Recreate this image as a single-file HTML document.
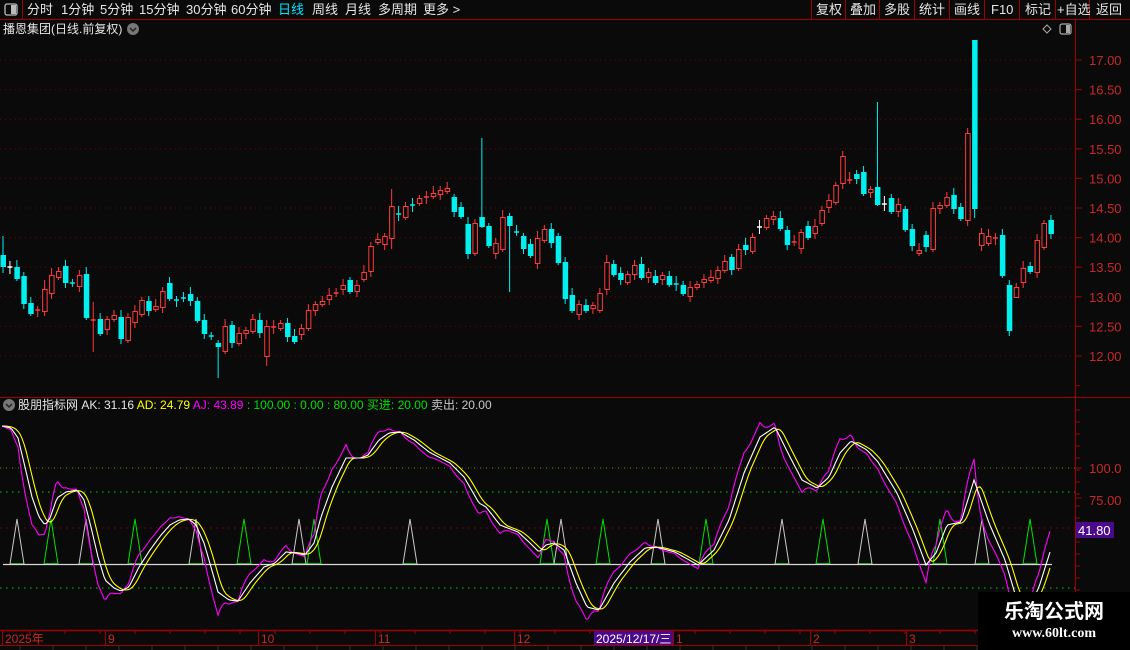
<!DOCTYPE html>
<html><head><meta charset="utf-8"><style>
html,body{margin:0;padding:0;background:#0a0a0a;width:1130px;height:650px;overflow:hidden;font-family:"Liberation Sans","Noto Sans CJK SC",sans-serif;}
.t{position:absolute;font-size:13px;color:#e6e6e6;white-space:nowrap;line-height:19px;top:0}
svg{position:absolute;left:0;top:0}
</style></head><body>
<svg id="s" width="1130" height="650" xmlns="http://www.w3.org/2000/svg"></svg>
<div class="t" style="left:27px">分时</div>
<div class="t" style="left:61px">1分钟</div>
<div class="t" style="left:100px">5分钟</div>
<div class="t" style="left:139px">15分钟</div>
<div class="t" style="left:186px">30分钟</div>
<div class="t" style="left:231px">60分钟</div>
<div class="t" style="left:278px;color:#00e5ff">日线</div>
<div class="t" style="left:312px">周线</div>
<div class="t" style="left:345px">月线</div>
<div class="t" style="left:378px">多周期</div>
<div class="t" style="left:423px">更多 &gt;</div>
<div class="t" style="left:816px">复权</div>
<div class="t" style="left:850px">叠加</div>
<div class="t" style="left:884px">多股</div>
<div class="t" style="left:919px">统计</div>
<div class="t" style="left:954px">画线</div>
<div class="t" style="left:991px">F10</div>
<div class="t" style="left:1025px">标记</div>
<div class="t" style="left:1057px">+自选</div>
<div class="t" style="left:1096px">返回</div>
<div class="t" style="left:3px;top:20px;font-size:12px">播恩集团(日线.前复权)</div>
<div class="t" style="left:18px;top:396px;font-size:12px">股朋指标网 AK: 31.16 <span style="color:#ffff00">AD: 24.79</span> <span style="color:#ff00ff">AJ: 43.89</span> <span style="color:#00e000">: 100.00 : 0.00 : 80.00 买进: 20.00</span> <span style="color:#c8c8c8">卖出: 20.00</span></div>
<div style="position:absolute;left:978px;top:592px;width:152px;height:58px;background:#000"></div>
<div style="position:absolute;left:978px;top:596px;width:152px;text-align:center;color:#fff;font-size:20px;font-weight:bold;font-family:'Noto Sans CJK SC',sans-serif;line-height:28px">乐淘公式网</div>
<div style="position:absolute;left:978px;top:625px;width:152px;text-align:center;color:#fff;font-size:14px;font-weight:bold;font-family:'Liberation Serif',serif;line-height:18px">www.60lt.com</div>
<script>
const S=document.getElementById('s');let h='';
const R='#a00000';
h+=`<line x1="0" y1="19.5" x2="1130" y2="19.5" stroke="${R}"/>`;
h+=`<line x1="22.5" y1="0" x2="22.5" y2="19" stroke="${R}"/>`;
h+=`<rect x="5" y="4" width="12" height="11" rx="2" fill="none" stroke="#bbb" stroke-width="1.3"/><rect x="11" y="5" width="5" height="9" fill="#bbb"/>`;
[811,845,879,914,949,984,1019,1055,1089].forEach(x=>h+=`<line x1="${x+.5}" y1="0" x2="${x+.5}" y2="19" stroke="${R}"/>`);
h+=`<circle cx="133" cy="29" r="6" fill="#777"/><path d="M130 28 l3 3 l3 -3" stroke="#222" stroke-width="1.5" fill="none"/>`;
h+=`<path d="M1047 25 l4 4 l-4 4 l-4 -4z" fill="none" stroke="#aaa"/><rect x="1060" y="24" width="11" height="10" rx="2" fill="none" stroke="#aaa" stroke-width="1.2"/><rect x="1066" y="25" width="4" height="8" fill="#aaa"/>`;
h+=`<line x1="1075.5" y1="20" x2="1075.5" y2="630" stroke="${R}"/>`;
h+=`<line x1="0" y1="397.5" x2="1130" y2="397.5" stroke="${R}"/>`;
const py=p=>60+(17-p)*59.2;
for(let p=12;p<=17.001;p+=0.5){const y=py(p);h+=`<line x1="0" y1="${y}" x2="1075" y2="${y}" stroke="#7a0000" stroke-dasharray="1 4"/>`;
h+=`<line x1="1076" y1="${y}" x2="1082" y2="${y}" stroke="${R}"/><text x="1089" y="${y+5}" fill="#c82828" font-size="13">${p.toFixed(2)}</text>`;
h+=`<line x1="1076" y1="${y+29.6}" x2="1080" y2="${y+29.6}" stroke="${R}"/>`;}
const C=[
[255,266,'c'],[266,268,'w'],[267,278,'c'],[276,303,'c'],[303,313,'c'],[309,311,'r'],[289,311,'r'],[275,293,'r'],[271,277,'r'],[266,282,'c'],
[282,284,'c'],[275,286,'r'],[274,317,'c'],[319,321,'r'],[319,333,'c'],[319,329,'r'],[315,319,'r'],[317,338,'c'],[317,340,'r'],[311,322,'r'],
[300,314,'r'],[301,310,'c'],[306,309,'r'],[291,307,'r'],[283,298,'c'],[299,301,'c'],[297,299,'c'],[294,300,'c'],[301,320,'c'],[320,333,'c'],
[335,337,'c'],[343,346,'c'],[326,351,'r'],[325,342,'c'],[333,343,'r'],[330,333,'r'],[319,331,'r'],[320,332,'c'],[326,356,'r'],[326,328,'r'],
[323,328,'r'],[323,336,'c'],[336,341,'c'],[328,334,'r'],[310,328,'r'],[304,310,'r'],[301,304,'r'],[295,299,'r'],[292,294,'r'],[285,289,'r'],
[280,291,'c'],[285,291,'r'],[272,279,'r'],[246,271,'r'],[239,242,'r'],[236,244,'r'],[206,238,'r'],[213,215,'c'],[206,217,'r'],[204,206,'c'],
[198,203,'r'],[196,198,'r'],[193,196,'r'],[190,194,'r'],[188,191,'r'],[197,211,'c'],[207,216,'c'],[224,253,'c'],[223,253,'r'],[217,226,'c'],
[226,245,'c'],[243,253,'r'],[217,249,'r'],[216,225,'c'],[231,233,'c'],[236,248,'c'],[244,255,'c'],[238,263,'r'],[229,240,'r'],[229,242,'c'],
[236,262,'c'],[262,298,'c'],[295,310,'c'],[304,314,'r'],[305,310,'c'],[305,308,'r'],[293,310,'r'],[262,289,'r'],[264,274,'c'],[273,279,'c'],
[274,282,'r'],[265,274,'r'],[264,277,'c'],[272,277,'r'],[276,282,'c'],[275,279,'r'],[276,284,'c'],[283,285,'c'],[285,293,'c'],[287,296,'r'],
[284,287,'r'],[279,282,'r'],[277,280,'r'],[270,278,'r'],[261,270,'r'],[257,269,'c'],[249,268,'r'],[245,249,'c'],
[237,251,'r'],[226,228,'w'],[218,227,'r'],[216,219,'r'],[218,228,'c'],[230,244,'c'],[241,243,'r'],[232,248,'r'],[226,237,'c'],[226,233,'r'],
[210,223,'r'],[200,207,'r'],[185,202,'r'],[156,183,'r'],[179,181,'r'],[174,178,'c'],[172,193,'c'],[189,192,'r'],[187,204,'c'],[203,205,'w'],
[198,211,'c'],[204,211,'r'],[209,229,'c'],[229,245,'c'],[250,253,'r'],[235,246,'c'],[208,249,'r'],[205,208,'r'],[197,205,'r'],[195,208,'c'],
[207,218,'c'],[133,220,'r'],[40,208,'c'],[233,245,'r'],[236,243,'r'],[237,239,'r'],[235,275,'c'],[285,330,'c'],[287,297,'r'],[268,282,'r'],
[266,271,'c'],[240,272,'r'],[223,247,'r'],[220,233,'c']];
const W={0:[236,273],6:[280,316],13:[302,352],31:[340,378],38:[320,366],56:[189,249],69:[138,228],73:[213,292],126:[102,206],139:[128,226],140:[40,218],145:[280,336],146:[283,298]};
C.forEach((c,i)=>{const x=3+i*6.94;let [t,b,k]=c;let w=W[i]||[t-3-(i*7%5),b+3+(i*3%6)];
const col=k=='r'?'#ff3a3a':k=='c'?'#00f0f0':'#fff';
h+=`<line x1="${x}" y1="${w[0]}" x2="${x}" y2="${w[1]}" stroke="${col}"/>`;
if(b-t<=2){h+=`<line x1="${x-2.5}" y1="${t+1}" x2="${x+2.5}" y2="${t+1}" stroke="${col}" stroke-width="1.5"/>`;}
else if(k=='r')h+=`<rect x="${x-2}" y="${t+.5}" width="4.5" height="${b-t}" fill="#0a0a0a" stroke="${col}"/>`;
else h+=`<rect x="${x-2.5}" y="${t}" width="5.5" height="${b-t+1}" fill="${col}"/>`;});
h+=`<line x1="0" y1="468" x2="1075" y2="468" stroke="#00d000" stroke-dasharray="1 5"/><line x1="3" y1="468" x2="1075" y2="468" stroke="#900" stroke-dasharray="1 5"/>`;
h+=`<line x1="0" y1="492" x2="1075" y2="492" stroke="#00d000" stroke-dasharray="1.5 4.5"/>`;
h+=`<line x1="0" y1="528" x2="1075" y2="528" stroke="#900" stroke-dasharray="1.5 4.5"/>`;
h+=`<line x1="0" y1="588" x2="1075" y2="588" stroke="#00d000" stroke-dasharray="1.5 4.5"/>`;
h+=`<line x1="1076" y1="468" x2="1082" y2="468" stroke="${R}"/><text x="1089" y="473" fill="#c82828" font-size="13">100.0</text>`;
h+=`<line x1="1076" y1="498" x2="1082" y2="498" stroke="${R}"/><text x="1089" y="505" fill="#c82828" font-size="13">75.00</text>`;
for(let y=410;y<630;y+=12)h+=`<line x1="1076" y1="${y}" x2="1080" y2="${y}" stroke="${R}"/>`;
h+=`<rect x="1076" y="522" width="38" height="16" fill="#4a0a8a"/><text x="1078" y="535" fill="#fff" font-size="13">41.80</text>`;
const T=[[17,'w'],[51,'g'],[86,'w'],[135,'g'],[196,'w'],[244,'g'],[299,'w'],[314,'g'],[410,'w'],[547,'g'],[561,'w'],[603,'g'],[658,'w'],[706,'g'],[782,'w'],[823,'g'],[865,'w'],[940,'g'],[982,'w'],[1030,'g']];
T.forEach(([x,k])=>{const col=k=='w'?'#c8c8c8':'#00e000';h+=`<line x1="${x-7}" y1="564" x2="${x+7}" y2="564" stroke="#00e000" stroke-width="1.5"/><path d="M${x-7} 564 L${x} 519 L${x+7} 564" fill="none" stroke="${col}"/>`;});
h+=`<line x1="3" y1="564.5" x2="1052" y2="564.5" stroke="#d8d8d8" stroke-width="1.3"/>`;
const K=[[2,426],[11,428],[18,438],[25,467],[32,497],[39,517],[45,525],[50,518],[57,498],[66,492],[77,490],[84,500],[91,527],[98,557],[105,580],[114,588],[121,591],[129,587],[139,567],[150,550],[161,535],[170,525],[179,520],[189,519],[196,525],[204,543],[211,567],[218,592],[229,600],[238,601],[250,583],[264,567],[275,563],[286,552],[296,553],[305,555],[314,543],[321,517],[332,487],[346,458],[361,458],[368,455],[379,440],[389,433],[400,432],[414,440],[429,452],[450,463],[464,477],[479,503],[486,507],[500,525],[518,532],[529,542],[539,552],[546,545],[554,543],[564,550],[576,583],[587,607],[599,610],[614,583],[630,562],[645,548],[656,547],[675,552],[698,565],[714,550],[729,520],[744,473],[760,437],[775,427],[790,457],[802,480],[817,488],[829,477],[840,453],[851,441],[867,450],[878,462],[897,493],[913,530],[926,565],[936,553],[947,525],[961,522],[974,480],[989,523],[1005,560],[1016,597],[1028,610],[1039,587],[1050,552]];
const ak=[];for(let x=2;x<=1050;x++){let j=0;while(j<K.length-2&&K[j+1][0]<x)j++;const a=K[j],b=K[j+1];ak.push([x,a[1]+(b[1]-a[1])*(x-a[0])/(b[0]-a[0])]);}
const ad=ak.map((p,i)=>{let s=0,n=0;for(let k=i-9;k<=i-1;k++){const q=ak[Math.max(0,k)];s+=q[1];n++;}return [p[0],s/n];});
const aj=ak.map((p,i)=>[p[0],p[1]+1.3*(p[1]-ad[i][1])]);
const pl=(a,c)=>`<polyline points="${a.filter((_,i)=>i%2==0).map(p=>p[0]+','+p[1].toFixed(1)).join(' ')}" fill="none" stroke="${c}" stroke-width="1.1"/>`;
h+=pl(aj,'#ff00ff')+pl(ad,'#ffff00')+pl(ak,'#ffffff');
h+=`<circle cx="9" cy="405" r="6" fill="#777"/><path d="M6 404 l3 3 l3 -3" stroke="#222" stroke-width="1.5" fill="none"/>`;
h+=`<rect x="0" y="630" width="1130" height="20" fill="#0a0a0a"/>`;
h+=`<line x1="0" y1="630.5" x2="978" y2="630.5" stroke="${R}" stroke-width="1.5"/><line x1="0" y1="645.5" x2="978" y2="645.5" stroke="${R}"/>`;
[[2,'2025年'],[105,'9'],[258,'10'],[375,'11'],[514,'12'],[673,'1'],[810,'2'],[906,'3']].forEach(([x,t])=>{h+=`<line x1="${x+.5}" y1="631" x2="${x+.5}" y2="645" stroke="${R}"/><text x="${x+3}" y="643" fill="#c82828" font-size="12">${t}</text>`;});
for(let x=30;x<978;x+=35)h+=`<line x1="${x}" y1="631" x2="${x}" y2="634" stroke="${R}"/>`;
h+=`<rect x="594" y="631" width="79" height="14" fill="#4a0a8a"/><text x="596" y="643" fill="#fff" font-size="12">2025/12/17/三</text>`;
for(let x=20;x<978;x+=33)h+=`<line x1="${x}" y1="646" x2="${x}" y2="650" stroke="#333"/>`;
S.innerHTML=h;
</script>
</body></html>
